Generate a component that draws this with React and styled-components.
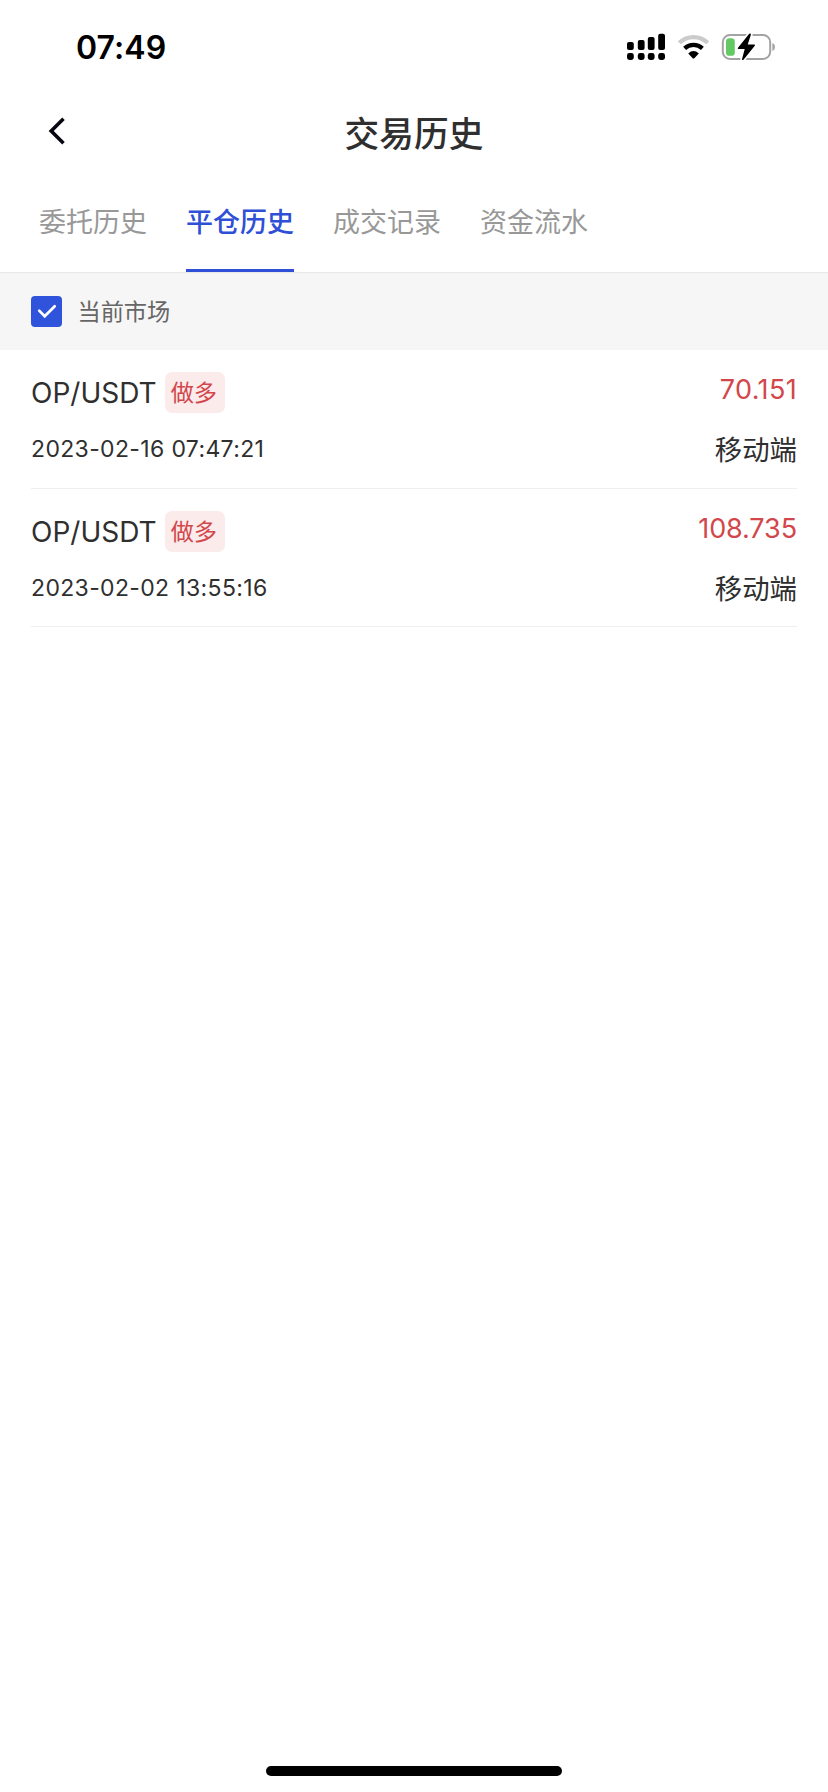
import React from "react";
import styled, { createGlobalStyle } from "styled-components";

const GlobalStyle = createGlobalStyle`
  * { box-sizing: border-box; }
  body {
    margin: 0;
    background: #fff;
    color: #2f2f2f;
    font-family: Inter, "Noto Sans CJK SC", sans-serif;
  }
`;

const Screen = styled.div`
  display: flex;
  flex-direction: column;
  width: 828px;
  height: 1792px;
  background: #fff;
  overflow: hidden;
`;

const StatusBar = styled.header`
  display: flex;
  flex: none;
  align-items: center;
  justify-content: space-between;
  height: 94px;
  padding: 0 52px 0 76px;
`;

const Clock = styled.time`
  padding-top: 1px;
  color: #000;
  font-size: 32px;
  font-weight: 600;
  line-height: 40px;
  letter-spacing: 0.1px;
`;

const StatusIcons = styled.svg`
  display: block;
  width: 150px;
  height: 32px;
`;

const NavBar = styled.nav`
  display: grid;
  flex: none;
  grid-template-columns: 100px 1fr 100px;
  align-items: center;
  height: 78px;
`;

const BackButton = styled.button`
  display: flex;
  padding: 0 0 4px 46px;
  border: 0;
  background: none;

  svg { display: block; }
`;

const Title = styled.h1`
  margin: 0;
  padding-top: 2px;
  font-size: 34.7px;
  font-weight: 500;
  line-height: 50px;
  text-align: center;
`;

const Tabs = styled.div`
  display: flex;
  flex: none;
  gap: 39px;
  height: 101px;
  padding: 0 39px;
  border-bottom: 1px solid #e8e8e8;
`;

const Tab = styled.button`
  height: 100px;
  padding: 5px 0 0;
  border: 0;
  border-bottom: 3px solid ${(p) => (p.$active ? "#2e4fd6" : "transparent")};
  background: none;
  color: ${(p) => (p.$active ? "#2e4fd6" : "#989898")};
  font-family: inherit;
  font-size: 27px;
  font-weight: ${(p) => (p.$active ? 500 : 400)};
  line-height: 92px;
  white-space: nowrap;
`;

const FilterBar = styled.label`
  display: flex;
  flex: none;
  align-items: center;
  gap: 15.5px;
  height: 77px;
  padding: 0 31px;
  background: #f6f6f6;
  color: #666;
  font-size: 23.2px;
  line-height: 34px;
`;

const CheckMark = styled.span`
  display: flex;
  width: 31px;
  height: 31px;
  border-radius: 4px;
  background: #3053dc;
`;

const Records = styled.main`
  flex: 1;
  padding: 0 31px;
`;

const Record = styled.article`
  display: flex;
  justify-content: space-between;
  height: 138.6px;
  border-bottom: 1px solid #efefef;
`;

const Side = styled.div`
  display: flex;
  flex-direction: column;
  align-items: ${(p) => (p.$end ? "flex-end" : "flex-start")};
  padding-top: ${(p) => (p.$end ? "20px" : "22px")};
`;

const Pair = styled.div`
  display: flex;
  align-items: center;
  gap: 8px;
  height: 41px;
  font-size: 28px;
  line-height: 41px;
`;

const Symbol = styled.span`
  padding-top: 2px;
`;

const Badge = styled.span`
  height: 41px;
  padding: 0 7.5px 0 6px;
  border-radius: 7px;
  background: #fbebeb;
  color: #d2474b;
  font-size: 23.2px;
  line-height: 42px;
`;

const DateText = styled.time`
  margin-top: 20px;
  font-size: 23px;
  line-height: 32px;
  letter-spacing: 0.35px;
`;

const Amount = styled.span`
  color: #d2474b;
  font-size: 27px;
  line-height: 40px;
  letter-spacing: ${(p) => p.$tracking};
`;

const Source = styled.span`
  margin-top: 20px;
  font-size: 27.4px;
  line-height: 40px;
`;

const HomeArea = styled.footer`
  display: flex;
  flex: none;
  justify-content: center;
  height: 26px;
`;

const HomeIndicator = styled.div`
  width: 296px;
  height: 10px;
  border-radius: 5px;
  background: #000;
`;

const tabs = ["委托历史", "平仓历史", "成交记录", "资金流水"];

const records = [
  { date: "2023-02-16 07:47:21", amount: "70.151", tracking: "0.35px" },
  { date: "2023-02-02 13:55:16", amount: "108.735", tracking: "-0.1px" },
];

function SystemIcons() {
  return (
    <StatusIcons viewBox="0 0 150 32">
      <rect x="1" y="11" width="6.8" height="8" rx="2" />
      <rect x="11.8" y="9" width="6.8" height="10" rx="2" />
      <rect x="21.8" y="6" width="6.8" height="13" rx="2" />
      <rect x="32.2" y="2.7" width="6.8" height="16.3" rx="2" />
      <rect x="1" y="22" width="6.8" height="7" rx="2.4" />
      <rect x="11.8" y="22" width="6.8" height="7" rx="2.4" />
      <rect x="21.8" y="22" width="6.8" height="7" rx="2.4" />
      <rect x="32.2" y="22" width="6.8" height="7" rx="2.4" />
      <g fill="none" strokeWidth="4.2">
        <path d="M53.3 11.8C61.4 4.1 73.6 4.1 81.7 11.8" stroke="#cbcbcb" />
        <path d="M58.6 17.4C63.7 12.7 71.3 12.7 76.4 17.4" stroke="#000" />
      </g>
      <path d="M62.2 22.4Q67.5 17.8 72.8 22.4L68.3 27.2Q67.5 28 66.7 27.2Z" />
      <rect x="96.8" y="4" width="47.4" height="24" rx="7.2" fill="none" stroke="#a3a3a3" strokeWidth="2" />
      <path d="M146.4 12C149.8 13.2 149.8 18.8 146.4 20Z" fill="#a3a3a3" />
      <rect x="100" y="7.2" width="8.8" height="17.6" rx="3.4" fill="#63c962" />
      <path
        d="M123.2 2.8L112 16.7Q111.2 18 112.6 18H118.7L116 28.2Q116 29.7 117.5 28.7L128.8 14.7Q129.5 13.4 128 13.4H121.7L124.9 3.8Q124.9 1.7 123.2 2.8Z"
        stroke="#fff"
        strokeWidth="3.5"
        paintOrder="stroke"
      />
    </StatusIcons>
  );
}

export default function App() {
  return (
    <>
      <GlobalStyle />
      <Screen>
        <StatusBar>
          <Clock>07:49</Clock>
          <SystemIcons />
        </StatusBar>
        <NavBar>
          <BackButton aria-label="返回">
            <svg width="22" height="30" viewBox="0 0 22 30">
              <path d="M17.5 2.8L5.2 15L17.5 27.2" fill="none" stroke="#070711" strokeWidth="3.6" />
            </svg>
          </BackButton>
          <Title>交易历史</Title>
        </NavBar>
        <Tabs>
          {tabs.map((label, i) => (
            <Tab key={label} $active={i === 1}>{label}</Tab>
          ))}
        </Tabs>
        <FilterBar>
          <CheckMark>
            <svg width="31" height="31" viewBox="0 0 31 31">
              <path d="M8.2 14.6L13.7 20.3L23.7 10.2" fill="none" stroke="#fff" strokeWidth="2.7" strokeLinecap="round" />
            </svg>
          </CheckMark>
          当前市场
        </FilterBar>
        <Records>
          {records.map((record) => (
            <Record key={record.date}>
              <Side>
                <Pair>
                  <Symbol>OP/USDT</Symbol>
                  <Badge>做多</Badge>
                </Pair>
                <DateText>{record.date}</DateText>
              </Side>
              <Side $end>
                <Amount $tracking={record.tracking}>{record.amount}</Amount>
                <Source>移动端</Source>
              </Side>
            </Record>
          ))}
        </Records>
        <HomeArea>
          <HomeIndicator />
        </HomeArea>
      </Screen>
    </>
  );
}
